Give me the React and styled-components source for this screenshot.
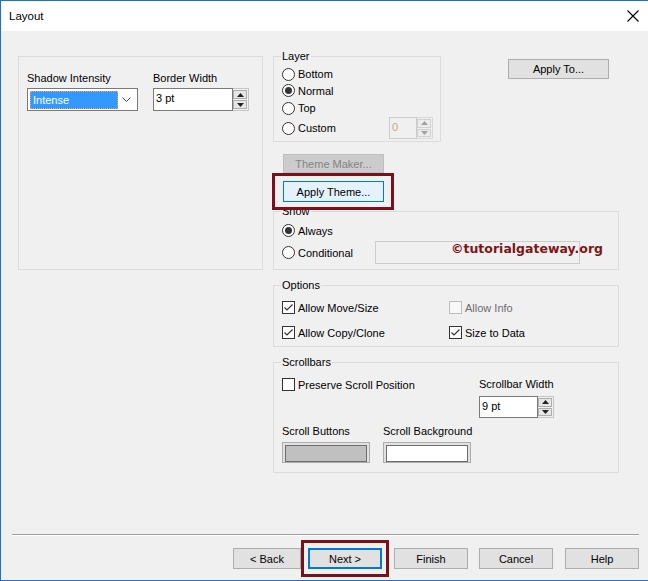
import React from "react"
import styled, { createGlobalStyle } from "styled-components"

const GlobalStyle = createGlobalStyle`
  html, body { margin: 0; padding: 0; background: #fff; }
  body {
    font-family: "Liberation Sans", Arial, sans-serif;
    font-size: 11px;
    color: #000;
  }
  * { box-sizing: border-box; }
`

const Window = styled.div`
  width: 648px;
  height: 581px;
  border: 1px solid #1a73c6;
  border-right: none;
  display: flex;
  flex-direction: column;
  background: #f0f0f0;
`

const TitleBar = styled.div`
  height: 30px;
  flex: none;
  background: #fff;
  display: flex;
  align-items: center;
  justify-content: space-between;
  padding: 0 9px 0 8px;
  font-size: 11.5px;
`

const Body = styled.div`
  flex: 1;
  display: flex;
  flex-direction: column;
`

const Main = styled.div`
  display: flex;
  align-items: flex-start;
  gap: 10px;
  padding: 19px 0 0 17px;
`

const Panel = styled.div`
  width: 245px;
  height: 214px;
  margin-top: 6px;
  border: 1px solid #dcdcdc;
  padding: 15px 8px 0;
  display: flex;
  gap: 15px;
`

const RightCol = styled.div`
  width: 346px;
  display: flex;
  flex-direction: column;
`

const TopRow = styled.div`
  display: flex;
  align-items: flex-start;
`

const Group = styled.fieldset`
  position: relative;
  margin: ${p => p.$mt || 0}px 0 0;
  min-width: 0;
  width: ${p => p.$w || 346}px;
  border: 1px solid #dcdcdc;
  padding: ${p => p.$pad};
`

const Legend = styled.legend`
  padding: 0 1px;
  margin-left: -1px;
  line-height: 13px;
`

const Field = styled.div`
  display: flex;
  flex-direction: column;
`

const Label = styled.div`
  line-height: 13px;
  margin-bottom: ${p => p.$mb || 3}px;
`

const OptionRow = styled.div`
  display: flex;
  align-items: center;
  gap: 3px;
  height: ${p => p.$h || 17}px;
  color: ${p => (p.$disabled ? "#6d6d6d" : "#000")};
`

const RadioMark = styled.span`
  flex: none;
  width: 13px;
  height: 13px;
  border-radius: 50%;
  border: 1px solid #333;
  background: #fff;
  display: inline-flex;
  align-items: center;
  justify-content: center;
  &::after {
    content: "";
    width: 7px;
    height: 7px;
    border-radius: 50%;
    background: ${p => (p.$on ? "#333" : "transparent")};
  }
`

const CheckMark = styled.span`
  flex: none;
  width: 13px;
  height: 13px;
  border: 1px solid ${p => (p.$disabled ? "#bcbcbc" : "#333")};
  background: ${p => (p.$disabled ? "#f7f7f7" : "#fff")};
  display: inline-flex;
  align-items: center;
  justify-content: center;
`

const Combo = styled.div`
  width: 111px;
  height: 23px;
  border: 1px solid #7a7a7a;
  background: #fff;
  padding: 2px;
  display: flex;
  align-items: center;
`

const Selected = styled.div`
  width: 88px;
  height: 18px;
  background: #3399ff;
  border: 1px dotted #e8a060;
  color: #fff;
  padding-left: 2px;
  line-height: 16px;
`

const Chevron = styled.span`
  flex: 1;
  display: flex;
  justify-content: center;
`

const Spin = styled.div`
  display: flex;
  height: ${p => p.$h || 23}px;
`

const SpinInput = styled.div`
  width: ${p => p.$w}px;
  border: 1px solid ${p => (p.$disabled ? "#cccccc" : "#7a7a7a")};
  background: ${p => (p.$disabled ? "#f0f0f0" : "#fff")};
  color: ${p => (p.$disabled ? "#c2a878" : "#000")};
  padding: 2px 0 0 2px;
  line-height: 14px;
`

const SpinButtons = styled.div`
  width: 16px;
  border: 1px solid ${p => (p.$disabled ? "#d8d8d8" : "#c6c6c6")};
  border-left: none;
  padding: 1px 1px 1px 0;
  display: flex;
  flex-direction: column;
  gap: 1px;
`

const SpinButton = styled.div`
  flex: 1;
  border: 1px solid ${p => (p.$disabled ? "#d0d0d0" : "#adadad")};
  background: ${p => (p.$disabled ? "#ececec" : "#e6e6e6")};
  display: flex;
  align-items: center;
  justify-content: center;
`

const Button = styled.button`
  width: ${p => p.$w || 74}px;
  height: ${p => p.$h || 21}px;
  margin: ${p => p.$m || 0};
  padding: 0;
  font: inherit;
  color: ${p => (p.disabled ? "#838383" : "#000")};
  background: ${p => (p.disabled ? "#cccccc" : p.$focus ? "#e5f1fb" : "#e1e1e1")};
  border: ${p => (p.$default ? "2px solid #0078d7" : p.$focus ? "1px solid #0078d7" : p.disabled ? "1px solid #bfbfbf" : "1px solid #adadad")};
`

const Marked = styled.div`
  position: relative;
  display: flex;
  align-self: flex-start;
  margin: ${p => p.$m || 0};
`

const Marker = styled.span`
  position: absolute;
  top: ${p => p.$t}px;
  bottom: ${p => p.$b}px;
  left: ${p => p.$l}px;
  right: ${p => p.$r}px;
  border: 3px solid #7b0f1c;
  pointer-events: none;
  z-index: 2;
`

const ShowGrid = styled.div`
  display: grid;
  grid-template-columns: 93px 205px;
  row-gap: 2px;
  align-items: center;
`

const DisabledBox = styled.div`
  height: 23px;
  border: 1px solid #cccccc;
  background: #f0f0f0;
`

const Watermark = styled.div`
  position: absolute;
  right: 15px;
  bottom: 12px;
  font-family: "DejaVu Sans", Verdana, sans-serif;
  font-weight: bold;
  font-size: 12.5px;
  line-height: 16px;
  color: #7f1518;
`

const OptionsGrid = styled.div`
  display: grid;
  grid-template-columns: 167px 1fr;
  row-gap: 8px;
`

const ScrollTop = styled.div`
  display: grid;
  grid-template-columns: 197px auto;
  align-items: start;
`

const SwatchRow = styled.div`
  display: flex;
  gap: 13px;
  margin-top: 7px;
`

const Swatch = styled.div`
  width: 88px;
  height: 21px;
  border: 1px solid #adadad;
  background: #e1e1e1;
  padding: 2px;
  &::after {
    content: "";
    display: block;
    height: 100%;
    border: 1px solid #6d6d6d;
    background: ${p => p.$fill};
  }
`

const Footer = styled.div`
  margin-top: auto;
`

const Separator = styled.div`
  margin: 0 9px 0 11px;
  border-top: 1px solid #a0a0a0;
  border-bottom: 1px solid #fff;
`

const ButtonBar = styled.div`
  display: flex;
  justify-content: flex-end;
  padding: 12px 9px 11px 0;
`

const Arrow = ({ up, disabled }) => (
  <svg width="7" height="4" viewBox="0 0 7 4">
    <polygon points={up ? "0,4 7,4 3.5,0" : "0,0 7,0 3.5,4"} fill={disabled ? "#a0a0a0" : "#222"} />
  </svg>
)

const SpinBox = ({ value, w, h, disabled }) => (
  <Spin $h={h}>
    <SpinInput $w={w} $disabled={disabled}>{value}</SpinInput>
    <SpinButtons $disabled={disabled}>
      <SpinButton $disabled={disabled}><Arrow up disabled={disabled} /></SpinButton>
      <SpinButton $disabled={disabled}><Arrow disabled={disabled} /></SpinButton>
    </SpinButtons>
  </Spin>
)

const Radio = ({ on, children, h }) => (
  <OptionRow $h={h}>
    <RadioMark $on={on} />
    {children}
  </OptionRow>
)

const Check = ({ on, disabled, children, h }) => (
  <OptionRow $h={h} $disabled={disabled}>
    <CheckMark $disabled={disabled}>
      {on && (
        <svg width="11" height="11" viewBox="0 0 11 11">
          <polyline points="1.5,5.5 4,8 9.5,2.5" fill="none" stroke="#333" strokeWidth="1.2" />
        </svg>
      )}
    </CheckMark>
    {children}
  </OptionRow>
)

export default function App() {
  return (
    <>
      <GlobalStyle />
      <Window>
        <TitleBar>
          <span>Layout</span>
          <svg width="12" height="12" viewBox="0 0 12 12">
            <path d="M0.5 0.5 L11.5 11.5 M11.5 0.5 L0.5 11.5" stroke="#000" strokeWidth="1.1" />
          </svg>
        </TitleBar>
        <Body>
          <Main>
            <Panel>
              <Field>
                <Label>Shadow Intensity</Label>
                <Combo>
                  <Selected>Intense</Selected>
                  <Chevron>
                    <svg width="9" height="5" viewBox="0 0 9 5">
                      <polyline points="0.5,0.5 4.5,4.5 8.5,0.5" fill="none" stroke="#444" strokeWidth="1" />
                    </svg>
                  </Chevron>
                </Combo>
              </Field>
              <Field>
                <Label>Border Width</Label>
                <SpinBox value="3 pt" w={80} />
              </Field>
            </Panel>

            <RightCol>
              <TopRow>
                <Group $w={168} $pad="3px 7px 2px 8px">
                  <Legend>Layer</Legend>
                  <Radio h={16}>Bottom</Radio>
                  <Radio on h={17}>Normal</Radio>
                  <Radio h={18}>Top</Radio>
                  <OptionRow $h={22}>
                    <RadioMark />
                    Custom
                    <span style={{ marginLeft: "auto" }}>
                      <SpinBox value="0" w={28} h={22} disabled />
                    </span>
                  </OptionRow>
                </Group>
                <Button $w={101} $h={20} $m="9px 0 0 67px">Apply To...</Button>
              </TopRow>

              <Button disabled $w={101} $h={19} $m="12px 0 0 10px">Theme Maker...</Button>
              <Marked $m="8px 0 0 10px">
                <Button $focus $w={101} $h={21}>Apply Theme...</Button>
                <Marker $t={-8} $b={-8} $l={-11} $r={-10} />
              </Marked>

              <Group $mt={3} $pad="4px 8px 5px 8px">
                <Legend>Show</Legend>
                <ShowGrid>
                  <Radio on>Always</Radio>
                  <span />
                  <Radio>Conditional</Radio>
                  <DisabledBox />
                </ShowGrid>
                <Watermark>©tutorialgateway.org</Watermark>
              </Group>

              <Group $mt={9} $pad="7px 8px 5px 8px">
                <Legend>Options</Legend>
                <OptionsGrid>
                  <Check on>Allow Move/Size</Check>
                  <Check disabled>Allow Info</Check>
                  <Check on>Allow Copy/Clone</Check>
                  <Check on>Size to Data</Check>
                </OptionsGrid>
              </Group>

              <Group $mt={9} $pad="9px 8px 9px 8px">
                <Legend>Scrollbars</Legend>
                <ScrollTop>
                  <Check h={13}>Preserve Scroll Position</Check>
                  <Field>
                    <Label $mb={5}>Scrollbar Width</Label>
                    <SpinBox value="9 pt" w={59} h={22} />
                  </Field>
                </ScrollTop>
                <SwatchRow>
                  <Field>
                    <Label $mb={4}>Scroll Buttons</Label>
                    <Swatch $fill="#c0c0c0" />
                  </Field>
                  <Field>
                    <Label $mb={4}>Scroll Background</Label>
                    <Swatch $fill="#fff" />
                  </Field>
                </SwatchRow>
              </Group>
            </RightCol>
          </Main>

          <Footer>
            <Separator />
            <ButtonBar>
              <Button $w={68} $m="0 7px 0 0">&lt; Back</Button>
              <Marked $m="0 12px 0 0">
                <Button $default>Next &gt;</Button>
                <Marker $t={-8} $b={-8} $l={-7} $r={-7} />
              </Marked>
              <Button $m="0 11px 0 0">Finish</Button>
              <Button $m="0 12px 0 0">Cancel</Button>
              <Button>Help</Button>
            </ButtonBar>
          </Footer>
        </Body>
      </Window>
    </>
  )
}
